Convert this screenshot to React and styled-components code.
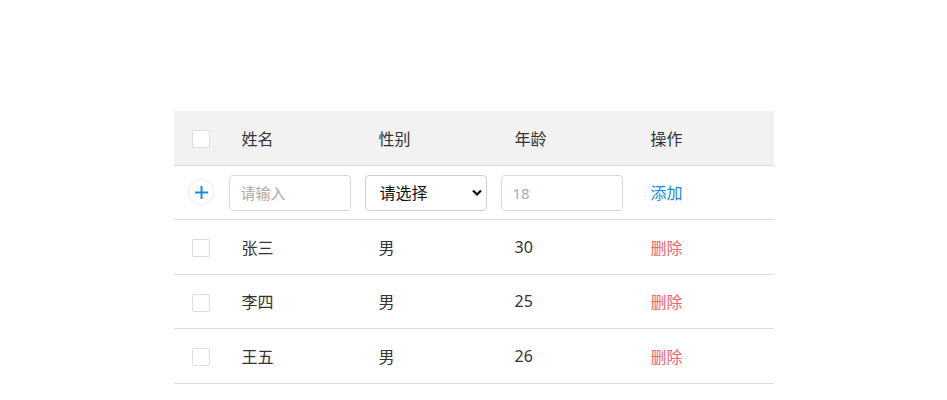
import React from 'react';
import styled, { createGlobalStyle } from 'styled-components';

const GlobalStyle = createGlobalStyle`
  body {
    margin: 0;
    background: #fff;
    font-family: "Noto Sans", "Noto Sans CJK SC", sans-serif;
    color: #333;
  }
`;

const Page = styled.div`
  padding-top: 111px;
`;

const Table = styled.table`
  width: 600px;
  margin: 0 auto;
  border-collapse: collapse;
  table-layout: fixed;
  font-size: 16px;
`;

const HeadRow = styled.tr`
  background: #f2f2f2;
`;

const Cell = styled.td`
  height: ${(p) => (p.$head ? 54 : 54.5)}px;
  padding: 0 0 0 ${(p) => (p.$flush || p.$center ? 0 : 13)}px;
  border-bottom: 1px solid #dcdcdc;
  text-align: ${(p) => (p.$center ? 'center' : 'left')};
  vertical-align: middle;
  box-sizing: border-box;
  color: #333;
  font-weight: normal;
`;

const Check = styled.span`
  display: inline-block;
  width: 16px;
  height: 16px;
  border: 1px solid #ddd;
  border-radius: 2px;
  background: #fff;
  vertical-align: middle;
`;

const AddButton = styled.button`
  width: 26px;
  height: 26px;
  border-radius: 50%;
  border: 1px solid #f0f0f0;
  background: #fff;
  box-shadow: 0 0 2px rgba(0, 0, 0, 0.06);
  display: inline-flex;
  align-items: center;
  justify-content: center;
  padding: 0;
  vertical-align: middle;
`;

const TextInput = styled.input`
  display: block;
  width: 122px;
  height: 36px;
  margin: 1px 0 0 ${(p) => p.$shift || 0}px;
  box-sizing: border-box;
  border: 1px solid #d9d9d9;
  border-radius: 4px;
  padding: 0 11px;
  font-family: inherit;
  font-size: 15px;
  color: #333;
  outline: none;
  &::placeholder {
    color: #aaa;
  }
`;

const SelectWrap = styled.div`
  position: relative;
  width: 122px;
  height: 36px;
  margin: 1px 0 0 -1px;
`;

const Select = styled.select`
  appearance: none;
  width: 100%;
  height: 100%;
  box-sizing: border-box;
  border: 1px solid #d0d0d0;
  border-radius: 4px;
  background: #fff;
  padding: 0 0 0 14px;
  font-family: inherit;
  font-size: 16px;
  color: #111;
  outline: none;
`;

const Chevron = styled.svg`
  position: absolute;
  right: 4px;
  top: 13px;
  pointer-events: none;
`;

const Action = styled.a`
  color: ${(p) => (p.$danger ? '#f0646a' : '#2187e0')};
  cursor: pointer;
`;

const rows = [
  { name: '张三', sex: '男', age: 30 },
  { name: '李四', sex: '男', age: 25 },
  { name: '王五', sex: '男', age: 26 },
];

export default function App() {
  return (
    <Page>
      <GlobalStyle />
      <Table>
        <colgroup>
          <col style={{ width: 55 }} />
          <col style={{ width: 137 }} />
          <col style={{ width: 136 }} />
          <col style={{ width: 136 }} />
          <col style={{ width: 136 }} />
        </colgroup>
        <thead>
          <HeadRow>
            <Cell as="th" $head $center><Check /></Cell>
            <Cell as="th" $head>姓名</Cell>
            <Cell as="th" $head>性别</Cell>
            <Cell as="th" $head>年龄</Cell>
            <Cell as="th" $head>操作</Cell>
          </HeadRow>
        </thead>
        <tbody>
          <tr>
            <Cell $center>
              <AddButton>
                <svg width="15" height="15" viewBox="0 0 15 15">
                  <path d="M7.5 1v13M1 7.5h13" stroke="#1e8ae6" strokeWidth="2" fill="none" />
                </svg>
              </AddButton>
            </Cell>
            <Cell $flush>
              <TextInput placeholder="请输入" />
            </Cell>
            <Cell $flush>
              <SelectWrap>
                <Select defaultValue="">
                  <option value="">请选择</option>
                  <option value="男">男</option>
                  <option value="女">女</option>
                </Select>
                <Chevron width="12" height="9" viewBox="0 0 12 9">
                  <path d="M2 2.5l4 4 4-4" stroke="#111" strokeWidth="2.2" fill="none" />
                </Chevron>
              </SelectWrap>
            </Cell>
            <Cell $flush>
              <TextInput placeholder="18" $shift={-1} />
            </Cell>
            <Cell>
              <Action>添加</Action>
            </Cell>
          </tr>
          {rows.map((r) => (
            <tr key={r.name}>
              <Cell $center><Check /></Cell>
              <Cell>{r.name}</Cell>
              <Cell>{r.sex}</Cell>
              <Cell>{r.age}</Cell>
              <Cell>
                <Action $danger>删除</Action>
              </Cell>
            </tr>
          ))}
        </tbody>
      </Table>
    </Page>
  );
}
